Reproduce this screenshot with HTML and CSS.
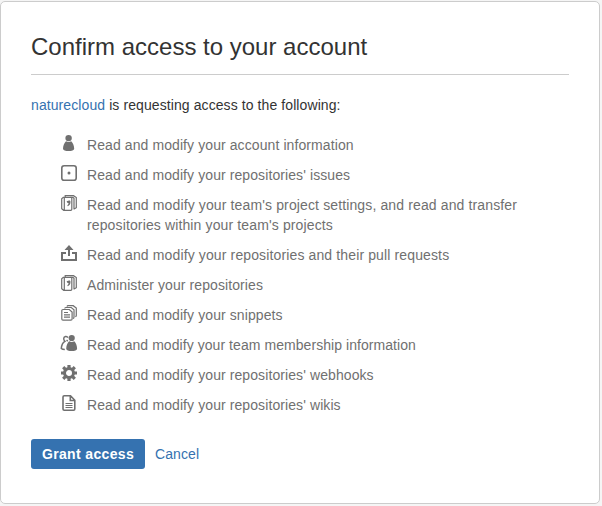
FILE: index.html
```html
<!DOCTYPE html>
<html lang="en">
<head>
<meta charset="utf-8">
<title>Confirm access to your account</title>
<link rel="stylesheet" href="styles.css">
</head>
<body>
<svg class="sprite" aria-hidden="true">
  <symbol id="repo" viewBox="0 0 16 16">
    <path class="line" d="M4.200 2V.7h8.300l2.800 1.800v10.200l-2.700 1.600M9.500 2.300h2.400l1.100 1v10.800"/>
    <path class="line" d="M2.300 2.300h7.500a1 1 0 0 1 1 1v11a1 1 0 0 1-1 1H2.700L.7 13.800V3.800zM3.300 2.500v12.400"/>
    <path d="M5.600 6.200l1.800-.4c.8-.5 2.100-.3 2.100 1.300 0 2.200-1.100 3.500-2.700 4.200l-.5-1c.9-.6 1.200-1.100 1.200-2.200-.8.1-1.500-.7-1.900-1.900z"/>
  </symbol>
</svg>
<main class="card">
  <h1 class="title">Confirm access to your account</h1>
  <p class="intro"><a class="link" href="#">naturecloud</a> is requesting access to the following:</p>
  <ul class="scopes">
    <li class="scope"><svg class="icon" viewBox="0 0 16 16"><circle cx="7.600" cy="3.100" r="3.200"/><path d="M5 6.200c1.600 1 3.600 1 5.200 0 1.800 1.800 2.900 4.600 3 7.500 0 1.400-2.600 2.300-5.600 2.300S2 15.100 2 13.700c.1-2.900 1.200-5.700 3-7.500z"/></svg><span>Read and modify your account information</span></li>
    <li class="scope"><svg class="icon" viewBox="0 0 16 16"><rect class="box" x=".8" y=".8" width="14.400" height="14.400" rx="2.300"/><circle cx="8" cy="8" r="1.500"/></svg><span>Read and modify your repositories' issues</span></li>
    <li class="scope loose"><svg class="icon"><use href="#repo"/></svg><span>Read and modify your team's project settings, and read and transfer repositories within your team's projects</span></li>
    <li class="scope loose"><svg class="icon" viewBox="0 0 16 16"><path d="M8 0l4.500 5H9v6H7V5H3.500zM0 7h5v2H2v5h12V9h-3V7h5v9H0z"/></svg><span>Read and modify your repositories and their pull requests</span></li>
    <li class="scope"><svg class="icon"><use href="#repo"/></svg><span>Administer your repositories</span></li>
    <li class="scope"><svg class="icon" viewBox="0 0 16 16"><path class="line" d="M6 1.700Q6.200.700 7.200.700h5L15.300 3v7.500q0 1-1 1.100M3.700 3.500q.1-1 1.100-1h5.400l2.800 2.300v7.500q0 1-1 1.100M2 4.500h6.300l2.800 2.500v7q0 1.200-1.200 1.200H2Q.8 15.200.8 14V5.700Q.8 4.500 2 4.500zM3 7.500h4M3 9.800h6M3 12.200h6"/></svg><span>Read and modify your snippets</span></li>
    <li class="scope tight"><svg class="icon" viewBox="0 0 16 16"><circle cx="10.700" cy="3" r="3.100"/><path d="M8.100 6.200c1.600 1 3.600 1 5.200 0 1.800 1.600 2.700 4.300 2.800 7.500 0 1.500-2.500 2.300-5.400 2.300s-5.500-.8-5.500-2.300c.1-3.200 1.100-5.900 2.900-7.500z"/><path class="line people" d="M6.900 2.600C6 .8 2.700 1.200 2.700 3.800c0 1.300.7 2 1.200 2.500C1.900 7.500.5 10 .3 13.500c.9.800 2 1 3.500 1M6.600 5l-.9 1.300"/></svg><span>Read and modify your team membership information</span></li>
    <li class="scope"><svg class="icon" viewBox="0 0 16 16"><circle class="gear-ring" cx="8" cy="8" r="4.500"/><path class="gear-teeth" d="M8 0v3.500M8 12.500V16M0 8h3.500M12.500 8H16M2.200 2.200l2.600 2.600M11.200 11.200l2.600 2.600M13.800 2.200l-2.600 2.600M4.800 11.200l-2.600 2.600"/></svg><span>Read and modify your repositories' webhooks</span></li>
    <li class="scope"><svg class="icon" viewBox="0 0 16 16"><path class="page" d="M3.200.7h6.300l4.300 4.600v8.800q0 1.200-1.200 1.200H3.200Q2 15.300 2 14.100V1.900Q2 .7 3.200.7zM9.300 1v4.500h4.300"/><path class="line" d="M4.500 8.500h7M4.500 10.500h7M4.500 12.500h7"/></svg><span>Read and modify your repositories' wikis</span></li>
  </ul>
  <div class="actions">
    <button class="grant" type="button">Grant access</button>
    <a class="link" href="#">Cancel</a>
  </div>
</main>
</body>
</html>
```
FILE: styles.css
```css
* { box-sizing: border-box; }
body {
  margin: 0;
  padding-top: 1px;
  background: #f5f5f5;
  color: #333;
  font: 14px/20px "Liberation Sans", Arial, sans-serif;
  letter-spacing: 0.09px;
}
.sprite { display: none; }
.card {
  width: 600px;
  height: 503px;
  padding: 30px;
  border: 1px solid #ccc;
  border-radius: 5px;
  background: #fff;
}
.title {
  height: 43px;
  margin: 0 0 20px;
  border-bottom: 1px solid #ccc;
  font-size: 24px;
  font-weight: 400;
  line-height: 30px;
  letter-spacing: 0;
}
.intro { margin: 0 0 20px; }
.link { color: #3572b0; text-decoration: none; }
.scopes {
  display: grid;
  gap: 10px;
  margin: 0 0 24px;
  padding: 0 0 0 30px;
  list-style: none;
  color: #707070;
}
.scope { display: flex; gap: 10px; }
.scope span { max-width: 440px; }
.loose { letter-spacing: 0.13px; }
.tight { letter-spacing: 0.06px; }
.icon {
  flex: none;
  width: 16px;
  height: 16px;
  overflow: visible;
  fill: #707070;
}
.line, .box, .page, .gear-ring, .gear-teeth { fill: none; stroke: #707070; }
.line { stroke-width: 1.2; }
.people { stroke-width: 1.5; }
.box, .page { stroke-width: 1.6; }
.gear-ring { stroke-width: 3; }
.gear-teeth { stroke-width: 3.2; }
.actions { display: flex; align-items: center; gap: 10px; }
.grant {
  width: 114px;
  height: 30px;
  padding: 0;
  border: 0;
  border-radius: 3px;
  background: #3572b0;
  color: #fff;
  font: bold 14px/20px "Liberation Sans", Arial, sans-serif;
  letter-spacing: 0.35px;
}
```
